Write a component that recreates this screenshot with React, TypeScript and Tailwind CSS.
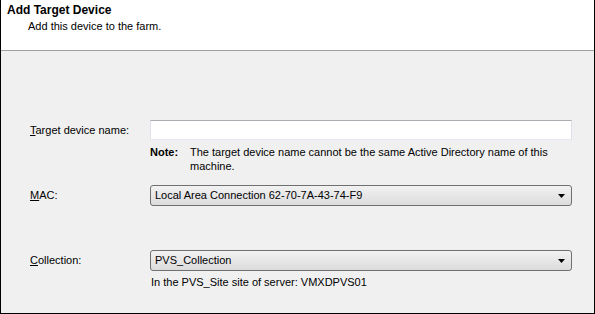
function Caret() {
  return (
    <svg width="7" height="4" viewBox="0 0 7 4" aria-hidden="true">
      <path d="M0 0H7L3.5 4Z" fill="#000" />
    </svg>
  );
}

function Combo({value}: {value: string}) {
  return (
    <div className="flex h-[21px] w-[422px] items-center justify-between rounded-[3px] border border-[#707070] bg-gradient-to-b from-[#f2f2f2] to-[#dcdcdc] pl-[4px] pr-[6px]">
      <span>{value}</span>
      <Caret />
    </div>
  );
}

export default function App() {
  return (
    <div
      className="flex h-[314px] w-[595px] flex-col border-b border-l border-r border-black bg-[#f0f0f0] text-[11px] text-black"
      style={{fontFamily: '"Liberation Sans", Arial, sans-serif'}}
    >
      <div className="h-[51px] border-b border-[#a0a0a0] bg-white pl-[6px] pt-[3px]">
        <p className="text-[12px] font-bold leading-[15px]">Add Target Device</p>
        <p className="pl-[21px] pt-[1px] leading-[14px]">Add this device to the farm.</p>
      </div>

      <div className="flex flex-col pl-[29px] pt-[69px]">
        <div className="flex items-center">
          <span className="w-[120px]">
            <u>T</u>arget device name:
          </span>
          <div className="h-[20px] w-[422px] border border-t-[#abadb3] border-l-[#e2e3ea] border-r-[#dbdfe6] border-b-[#e3e9ef] bg-white" />
        </div>
        <div className="ml-[120px] mt-[5px] flex leading-[14px]">
          <span className="w-[40px] font-bold">Note:</span>
          <span className="w-[385px]">
            The target device name cannot be the same Active Directory name of this machine.
          </span>
        </div>

        <div className="mt-[12px] flex items-center">
          <span className="w-[120px]">
            <u>M</u>AC:
          </span>
          <Combo value="Local Area Connection 62-70-7A-43-74-F9" />
        </div>

        <div className="mt-[44px] flex items-center">
          <span className="w-[120px]">
            <u>C</u>ollection:
          </span>
          <Combo value="PVS_Collection" />
        </div>
        <p className="ml-[121px] mt-[3px]">In the PVS_Site site of server: VMXDPVS01</p>
      </div>
    </div>
  );
}
